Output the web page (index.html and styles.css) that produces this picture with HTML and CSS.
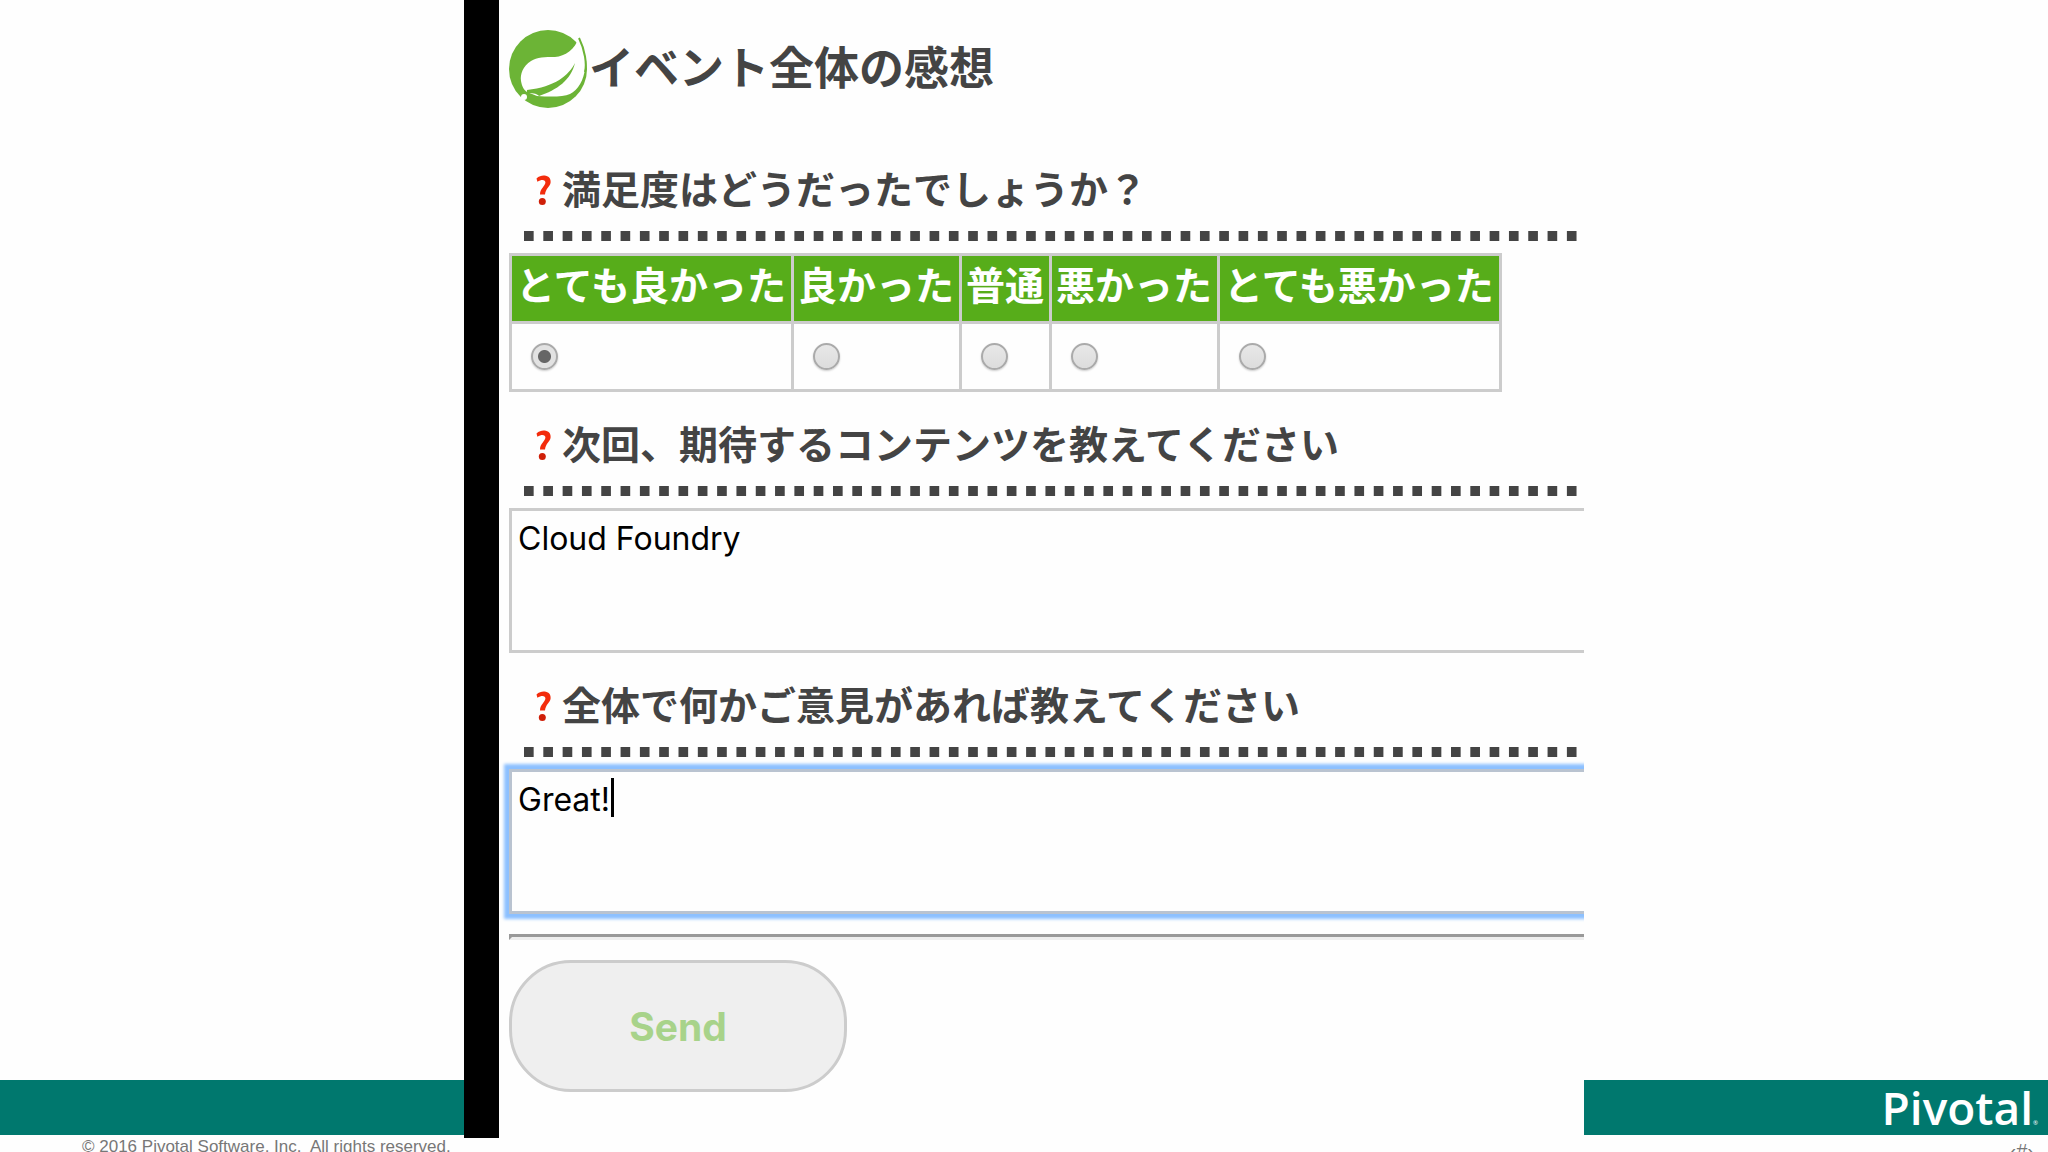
FILE: index.html
```html
<!DOCTYPE html>
<html lang="ja">
<head>
<meta charset="UTF-8">
<title>イベント全体の感想</title>
<link rel="stylesheet" href="styles.css">
</head>
<body>

<svg class="defs" aria-hidden="true">
  <symbol id="question" viewBox="0 0 15 30">
    <path d="M0.5 3.5 C3 1 6 0.3 8.5 0.5 C12.5 0.8 15 3.4 14.6 7.4 C14.2 11.6 9.6 13.2 9 19.5 L4 19.5 C4 13.5 9.2 11.4 9.4 7.6 C9.5 4.6 5.5 4.2 1.4 6.8 Z" fill="#f32c0c"/>
    <circle cx="6.3" cy="26.4" r="3.5" fill="#cf1f08"/>
  </symbol>
</svg>

<div class="slide">
  <div class="bar">
    <div class="brand">Pivotal<sup>®</sup></div>
  </div>

  <main class="shot">
    <form class="survey">
      <h1>
        <svg class="logo" viewBox="0 0 78 78" aria-hidden="true">
          <circle cx="39" cy="39" r="39" fill="#6cb436"/>
          <path d="M70 7 C66 20 56 26 46 27 C36 27 28 27 22 31 C14 36 11 44 12 51 C13 57 15 60 18 62 L28 66 C42 67 54 67 61 64 C69 60 75 50 76 38 C77 26 75 14 70 7 Z" fill="#fff"/>
          <path d="M66 33 C60 45 46 57 18 60 L18 63 C26 63 28 64 30 66 C48 60 62 50 66 33 Z" fill="#6cb436"/>
          <path d="M70 8 C76 20 78 34 76 42" fill="none" stroke="#6cb436" stroke-width="2"/>
          <circle cx="15" cy="67" r="3" fill="#fff"/>
        </svg>
        イベント全体の感想
      </h1>

      <h2 id="q1"><svg class="question"><use href="#question"/></svg>満足度はどうだったでしょうか？</h2>
      <table>
        <thead>
          <tr>
            <th><label for="s5">とても良かった</label></th>
            <th><label for="s4">良かった</label></th>
            <th><label for="s3">普通</label></th>
            <th><label for="s2">悪かった</label></th>
            <th><label for="s1">とても悪かった</label></th>
          </tr>
        </thead>
        <tbody>
          <tr>
            <td><input type="radio" name="satisfaction" id="s5" value="5" checked></td>
            <td><input type="radio" name="satisfaction" id="s4" value="4"></td>
            <td><input type="radio" name="satisfaction" id="s3" value="3"></td>
            <td><input type="radio" name="satisfaction" id="s2" value="2"></td>
            <td><input type="radio" name="satisfaction" id="s1" value="1"></td>
          </tr>
        </tbody>
      </table>

      <h2><svg class="question"><use href="#question"/></svg><label for="request">次回、期待するコンテンツを教えてください</label></h2>
      <div class="field">
        <textarea id="request" name="request">Cloud Foundry</textarea>
      </div>

      <h2><svg class="question"><use href="#question"/></svg><label for="comment">全体で何かご意見があれば教えてください</label></h2>
      <div class="field">
        <textarea id="comment" name="comment" class="active">Great!</textarea>
        <span class="caret"></span>
      </div>

      <hr>
      <button type="submit">Send</button>
    </form>
  </main>

  <footer>
    <span>© 2016 Pivotal Software, Inc.&nbsp; All rights reserved.</span>
    <span class="page">‹#›</span>
  </footer>
</div>

</body>
</html>
```

FILE: styles.css
```css
:root {
  --teal: #00786e;
  --green: #57ad1a;
  --text: #444;
  --line: #ccc;
}
* {
  box-sizing: border-box;
}
body {
  margin: 0;
  background: #fefefe;
  color: var(--text);
  font-family: Inter, "Noto Sans CJK JP", sans-serif;
}
.defs {
  display: none;
}

/* slide */
.slide {
  display: grid;
  grid-template-columns: 29fr 70fr 29fr;
  grid-template-rows: 1fr 55px 17px;
  height: 100vh;
  overflow: hidden;
}
.bar {
  grid-area: 2 / 1 / 3 / 4;
  display: flex;
  align-items: center;
  justify-content: flex-end;
  padding-right: 10px;
  background: var(--teal);
}
.brand {
  color: #fff;
  font-family: "Open Sans", sans-serif;
  font-size: 46px;
  font-weight: 600;
  line-height: 55px;
}
.brand sup {
  font-size: 6px;
  font-weight: 400;
  line-height: 6px;
  vertical-align: baseline;
}
footer {
  grid-area: 3 / 1 / 4 / 4;
  display: flex;
  justify-content: space-between;
  padding: 0 14px 0 82px;
  color: #777;
  font-family: "Liberation Sans", sans-serif;
  font-size: 17px;
  line-height: 24px;
}
.page {
  font-size: 20px;
  line-height: 32px;
}

/* survey */
.shot {
  grid-area: 1 / 2 / 3 / 3;
  margin-bottom: -3px;
  padding: 30px 0 0 10px;
  border-left: 35px solid #000;
  background: #fefefe;
  overflow: hidden;
}
h1 {
  display: flex;
  align-items: center;
  gap: 2px;
  margin: 0 0 52px;
  font-size: 45px;
  line-height: 78px;
}
.logo {
  width: 78px;
  height: 78px;
}
h2 {
  display: flex;
  align-items: center;
  width: calc(100% - 12px);
  margin: 23px 0 12px 15px;
  padding: 0 0 21px 12px;
  background: linear-gradient(90deg, var(--text) 10px, transparent 10px) left bottom / calc(100% / 55) 10px repeat-x;
  font-size: 39px;
  line-height: 60px;
  white-space: nowrap;
}
.question {
  width: 15px;
  height: 30px;
  margin-right: 11px;
}
table {
  border-collapse: collapse;
}
th, td {
  height: 68px;
  padding: 0 5px 0 4px;
  border: 3px solid var(--line);
  text-align: left;
}
th {
  padding-bottom: 5px;
  background: var(--green);
  color: #fff;
  font-size: 39px;
  line-height: 60px;
  white-space: nowrap;
}
input[type="radio"] {
  appearance: none;
  display: block;
  width: 27px;
  height: 27px;
  margin: 0 0 0 15px;
  border: 2px solid #aaa;
  border-radius: 50%;
  background: linear-gradient(#e8e8e8, #dcdcdc);
  box-shadow: 0 1px 2px #ccc;
}
input[type="radio"]:checked {
  background: radial-gradient(circle, #666 6px, #e2e2e2 7px);
}
.field {
  position: relative;
}
textarea {
  display: block;
  width: calc(100% + 20px);
  height: 145px;
  padding: 8px 6px;
  border: 3px solid var(--line);
  outline: none;
  resize: none;
  background: #fefefe;
  color: #000;
  font-family: Inter, sans-serif;
  font-size: 32px;
  line-height: 40px;
}
textarea.active {
  border-color: #b9c3d0;
  box-shadow: 0 0 3px 5px #8cc0ff;
}
.caret {
  position: absolute;
  top: 9px;
  left: 102px;
  width: 3px;
  height: 39px;
  background: #000;
}
hr {
  width: calc(100% + 20px);
  margin: 20px 0;
  border: 3px solid;
  border-color: #999 #eee #eee #999;
}
button {
  width: 338px;
  height: 132px;
  border: 3px solid var(--line);
  border-radius: 62px;
  background: #efefef;
  color: #a8d38a;
  font-family: Inter, sans-serif;
  font-size: 39px;
  font-weight: 700;
}
```
